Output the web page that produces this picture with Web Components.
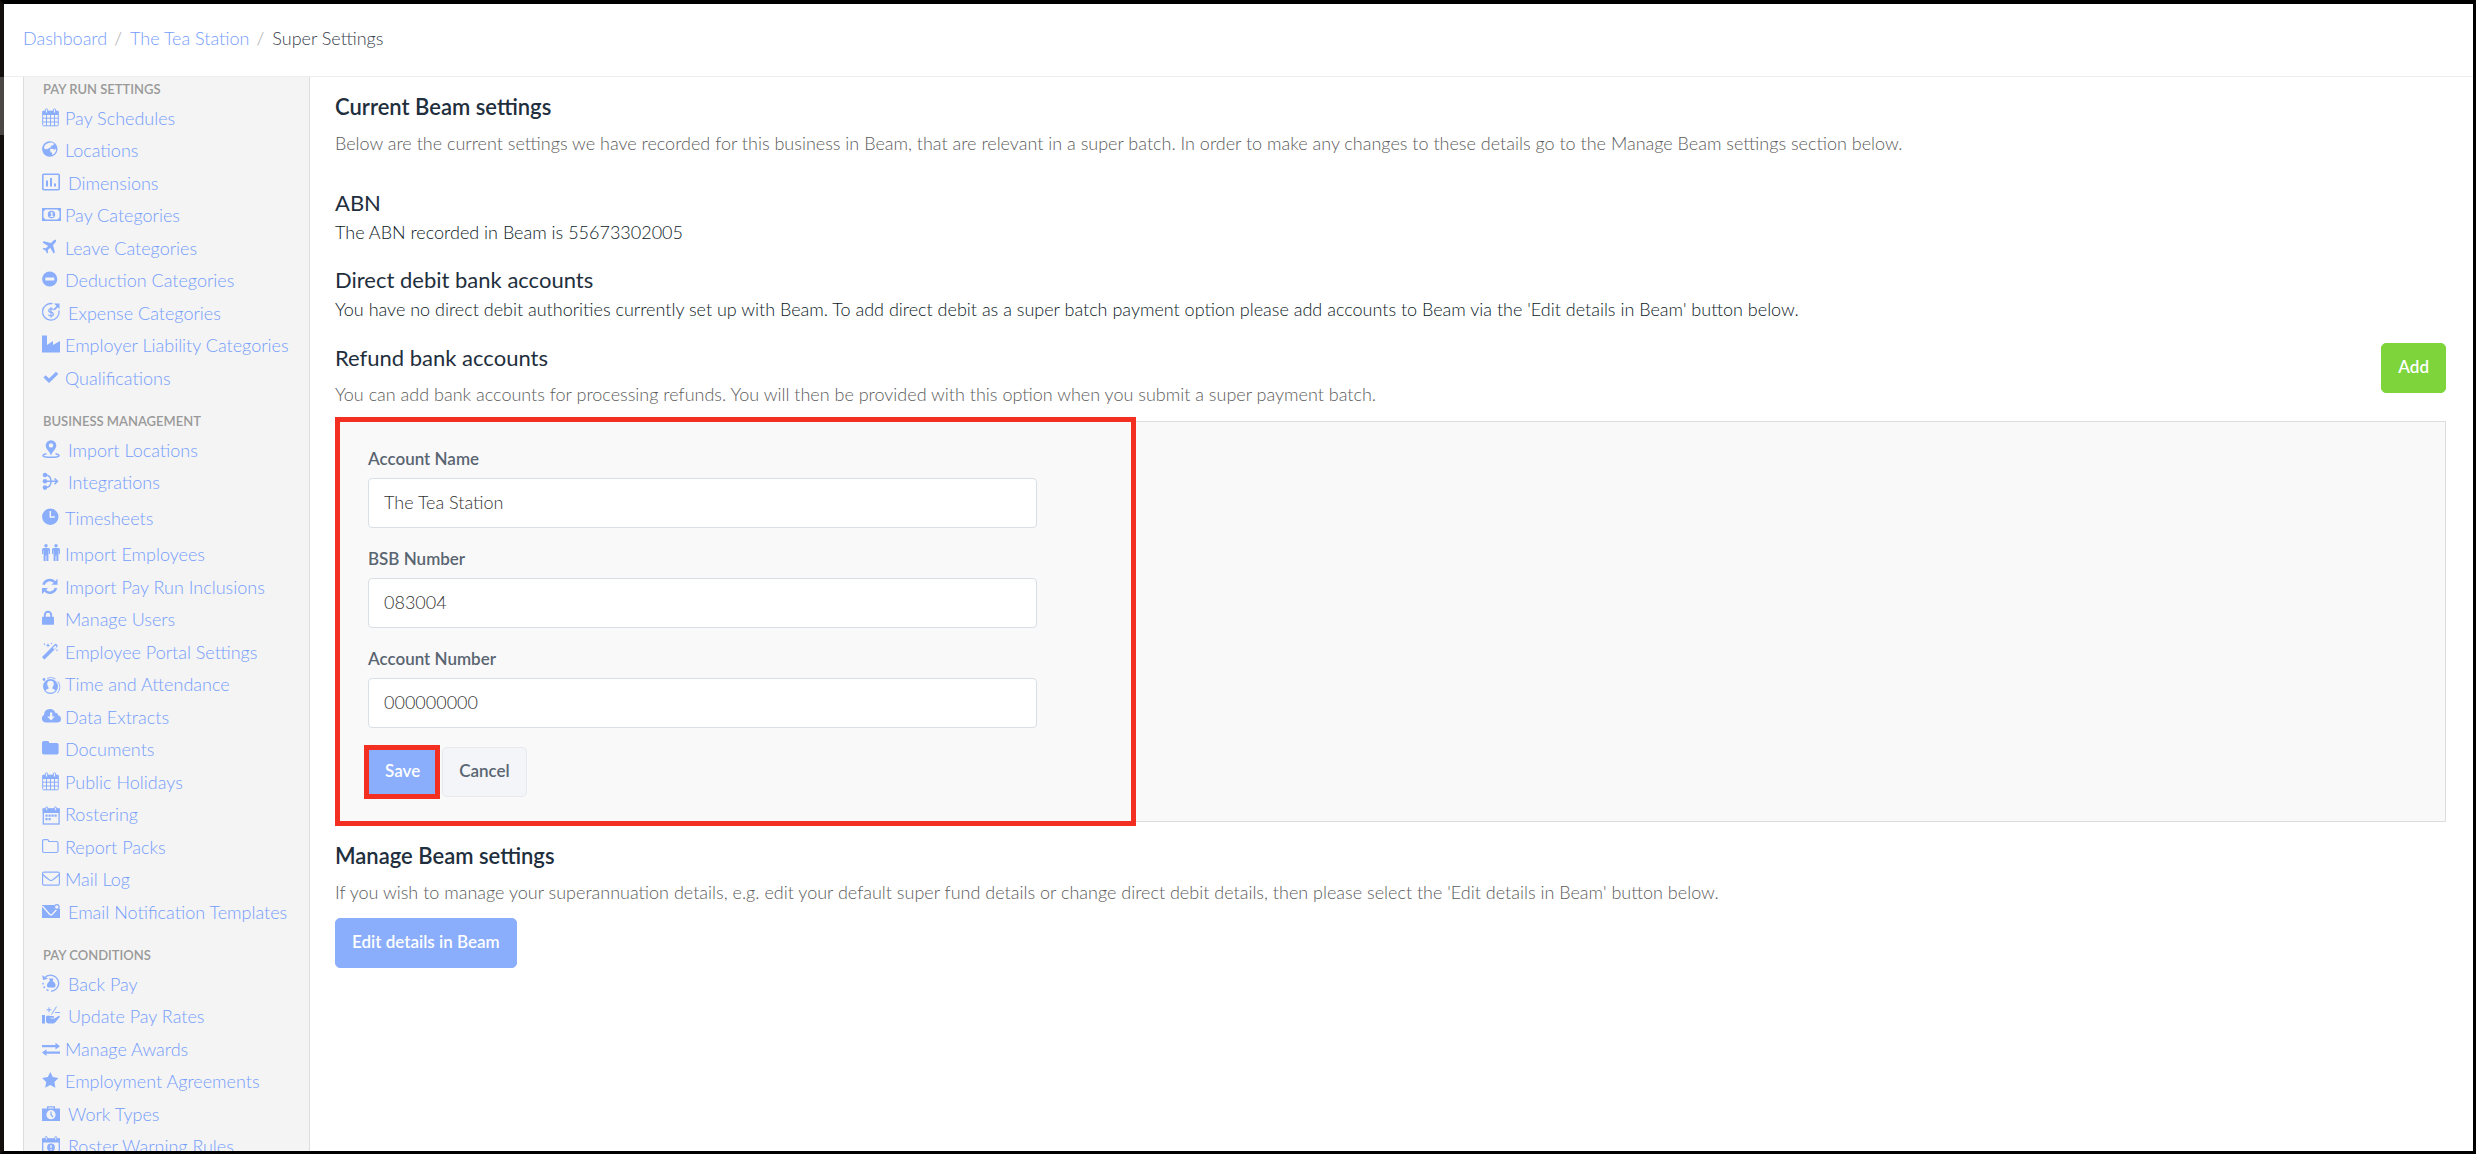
<!DOCTYPE html>
<html lang="en">
<head>
<meta charset="utf-8">
<title>Super Settings</title>
<style>
    body {
        margin: 0;
        font-family: Lato, "Open Sans", sans-serif;
        font-size: 18px;
        font-weight: 300;
        line-height: 24px;
        color: #0c1a26;
        background-color: white;
        --accent: #8aadfc;
        --link: #759dfc;
        --muted: #5c5c5c;
        --label: #5a6572;
        --mark: #f22f20;
        --side: #f4f4f4;
    }
</style>
</head>
<body>
<app-shell>
    <bread-crumbs slot="header" trail="Dashboard,The Tea Station" current="Super Settings"></bread-crumbs>

    <nav-section slot="sidebar" heading="Pay run settings">
        <nav-item icon="calendar">Pay Schedules</nav-item>
        <nav-item icon="globe">Locations</nav-item>
        <nav-item icon="chart" wide>Dimensions</nav-item>
        <nav-item icon="money">Pay Categories</nav-item>
        <nav-item icon="plane">Leave Categories</nav-item>
        <nav-item icon="minus">Deduction Categories</nav-item>
        <nav-item icon="expense" wide>Expense Categories</nav-item>
        <nav-item icon="industry">Employer Liability Categories</nav-item>
        <nav-item icon="check">Qualifications</nav-item>
    </nav-section>

    <nav-section slot="sidebar" heading="Business management">
        <nav-item icon="pin" wide>Import Locations</nav-item>
        <nav-item icon="merge" wide>Integrations</nav-item>
        <nav-item icon="clock" roomy>Timesheets</nav-item>
        <nav-item icon="people">Import Employees</nav-item>
        <nav-item icon="refresh">Import Pay Run Inclusions</nav-item>
        <nav-item icon="lock">Manage Users</nav-item>
        <nav-item icon="wand">Employee Portal Settings</nav-item>
        <nav-item icon="attendance">Time and Attendance</nav-item>
        <nav-item icon="cloud">Data Extracts</nav-item>
        <nav-item icon="folder">Documents</nav-item>
        <nav-item icon="calendar">Public Holidays</nav-item>
        <nav-item icon="roster">Rostering</nav-item>
        <nav-item icon="folderopen">Report Packs</nav-item>
        <nav-item icon="mail">Mail Log</nav-item>
        <nav-item icon="mailnotice" wide>Email Notification Templates</nav-item>
    </nav-section>

    <nav-section slot="sidebar" heading="Pay conditions">
        <nav-item icon="backpay" wide>Back Pay</nav-item>
        <nav-item icon="rates" wide>Update Pay Rates</nav-item>
        <nav-item icon="exchange">Manage Awards</nav-item>
        <nav-item icon="star">Employment Agreements</nav-item>
        <nav-item icon="worktype" wide>Work Types</nav-item>
        <nav-item icon="warning" wide>Roster Warning Rules</nav-item>
    </nav-section>

    <super-settings></super-settings>
</app-shell>

<script>
// Every drawing has its text's middle line at y = 10
const ICONS = {
    calendar: `<g fill="none" stroke="currentColor"><rect x=".7" y="3.2" width="15.6" height="14.6" rx="1"/><path d="M.7 6.5h15.6M.7 10.2h15.6M.7 14h15.6M4.5 6v12M8.5 6v12M12.5 6v12"/></g><path d="M.5 3h16v3.4H.5z"/><g fill="#f4f4f4" stroke="currentColor"><rect x="3.4" y=".8" width="2.2" height="4.2" rx="1"/><rect x="11.4" y=".8" width="2.2" height="4.2" rx="1"/></g>`,
    globe: `<circle cx="7.8" cy="9" r="7.7"/><path fill="#f4f4f4" d="M8.500 2.500l2.500.2 1 1.300-1.200 1.500-1.800.3-.3 1.700-2 .4-.7 1.600-1.200-.8L3 9.500 2 7.500l.8-2.300L5 3.500zM8 9l2.500-.2L13 10l.8-2 .4 2.500-1.700 3-2.500 1.700.3-2.200L8.500 12z"/>`,
    chart: `<rect x=".8" y="1.3" width="16.4" height="15.4" rx="1" fill="none" stroke="currentColor" stroke-width="1.6"/><path d="M4 7.5h2v6H4zM8 5h2v8.5H8zM12 10.5h2v3h-2z"/>`,
    money: `<path fill-rule="evenodd" d="M0 3h19v13H0zM3.5 4.5L1.5 6.5v6l2 2h12l2-2v-6l-2-2z"/><circle cx="9.5" cy="9.5" r="3.7"/><path fill="#f4f4f4" d="M8.3 8l1.4-1h.9v4h.8v.9H8.200V11h1V8.300l-.6.4z"/>`,
    plane: `<path d="M14 1.800q.7 1.500-1 3.200L11 7l1.900 7.300-1.300 1.200-3.400-5.700-2.500 2.400.4 2.200-1 1L3.500 12.500.5 11l1-1 2.300.3 2.400-2.400L.5 4.500l1.300-1.200L9 5l2-2q1.800-1.700 3-1.200z"/>`,
    minus: `<circle cx="7.700" cy="9" r="7.600"/><rect x="3.300" y="7.500" width="9" height="3" rx=".6" fill="#f4f4f4"/>`,
    expense: `<path d="M10.500.7A8.300 8.300 0 1 0 17 7.500" fill="none" stroke="currentColor" stroke-width="1.300"/><path d="M12 .5h5.500V6l-1.700-1.700-3 3-1.200-1.200 3-3z"/><path d="M11.500 7Q11 5.700 9 5.700T6.700 7.400Q6.700 9 9 9.200t2.400 2Q11.400 13 9 13t-2.600-1.500M9 4.300v10.400" fill="none" stroke="currentColor" stroke-width="1.200"/>`,
    industry: `<path d="M0 .5h5V10l6-4v4l7-4v11.500H0z"/>`,
    check: `<path d="M1.500 9.500l2.200-2.200 3.300 3.200L14 3.800 16.300 6 7 15z"/>`,
    pin: `<path fill-rule="evenodd" d="M9 .2a5.300 5.300 0 0 1 5.300 5.300C14.300 9 10.500 11 9 15.500 7.500 11 3.700 9 3.700 5.500A5.300 5.300 0 0 1 9 .2zm0 3a2.200 2.200 0 1 0 0 4.400 2.200 2.200 0 0 0 0-4.400z"/><path d="M4.500 13.800Q1 14.500 1 15.800q0 1.500 8 1.500t8-1.500q0-1.300-3.500-2" fill="none" stroke="currentColor" stroke-width="1.600"/>`,
    merge: `<circle cx="3" cy="3" r="2.300"/><circle cx="3" cy="9.300" r="2.300"/><circle cx="3" cy="15.600" r="2.300"/><path d="M3 3c5 0 6 3 6 6.300S8 15.600 3 15.600M3 9.300h12M12.500 6.500l3 2.800-3 2.800" fill="none" stroke="currentColor" stroke-width="1.500"/>`,
    clock: `<circle cx="8.300" cy="8.700" r="8.200"/><path d="M8.300 3v6h4.500" fill="none" stroke="#f4f4f4" stroke-width="1.500"/>`,
    people: `<g id="man"><circle cx="4" cy="1.700" r="1.700"/><path d="M1.500 4h5Q8 4 8 5.500V10H6.800V6.500h-.4V17H4.400v-5.500h-.8V17H1.600V6.500h-.4V10H0V5.500Q0 4 1.500 4z"/></g><use href="#man" x="10"/>`,
    refresh: `<path d="M1.500 7.800A6.500 6.500 0 0 1 12.500 5M14 11a6.500 6.500 0 0 1-11 2.700" fill="none" stroke="currentColor" stroke-width="2.500"/><path d="M15.500 1.700v6h-6zM0 17v-6h6z"/>`,
    lock: `<path d="M2.800 9V6a3.200 3.200 0 0 1 6.400 0v3" fill="none" stroke="currentColor" stroke-width="1.900"/><rect y="7.800" width="12" height="8" rx=".8"/>`,
    wand: `<path fill-rule="evenodd" d="M.5 14.500L13 2q.6-.5 1.200 0l1.300 1.200q.5.600 0 1.200L3 17q-.6.500-1.200 0L.5 15.700q-.5-.6 0-1.200zM10.800 6l1.300 1.300 2.500-2.500-1.300-1.300z"/><path d="M6 1l.6 1.700L8.300 3.400l-1.700.6L6 5.700l-.6-1.700-1.700-.6 1.700-.7zM2.500 1l.4.800.8.400-.8.400-.4.800-.4-.8-.8-.4.800-.4zM9.500.3l.3.700.7.300-.7.400-.3.700-.3-.7-.7-.4.700-.3zM15 7l.4.800.8.400-.8.400-.4.800-.4-.8-.8-.4.800-.4z"/>`,
    attendance: `<circle cx="8.500" cy="12.500" r="7.500"/><path fill="#f4f4f4" d="M8.500 6.800q3.300 0 3.300 3.300 0 2-1.300 3.200v1.500q2.300.5 3 2-2 2-5 2t-5-2q.7-1.500 3-2v-1.500q-1.300-1.200-1.300-3.200 0-3.300 3.300-3.300z"/><path d="M16 7.500A9 9 0 0 1 15.500 19M5 4.300A9 9 0 0 1 13.500 4.800" fill="none" stroke="currentColor" stroke-width=".9"/><circle cx="2" cy="5.500" r="1.400"/>`,
    cloud: `<path fill-rule="evenodd" d="M4 15.500A4 4 0 0 1 2 8q.3-6 6-6 4 0 5.200 3.700Q16 5.500 16 8.300q3 .8 3 3.700 0 3.500-4 3.500zM8 5.500V9.500H5.300L9 13.500l3.700-4H10.300v-4z"/>`,
    folder: `<path d="M1.800 2h3.800q1.700 0 1.700 2h7.500Q16.600 4 16.600 5.700v8Q16.600 15.500 14.800 15.500H1.800Q0 15.500 0 13.700v-10Q0 2 1.800 2z"/>`,
    roster: `<rect x="1.300" y="5" width="15.800" height="15" fill="none" stroke="currentColor" stroke-width="1.300"/><path d="M.7 4.500h17V9H.7z"/><g fill="#f4f4f4" stroke="currentColor"><rect x="3.700" y="2.900" width="2" height="3.600" rx="1"/><rect x="12.400" y="2.900" width="2" height="3.600" rx="1"/></g><path d="M6.500 10.500h2.200v2.200H6.500zM9.500 10.500h2.200v2.200H9.500zM12.500 10.500h2.200v2.200h-2.200zM3.400 10.500h2.200v2.200H3.400zM3.400 14h2.200v2.200H3.400zM6.500 14h2.200v2.200H6.500z"/>`,
    folderopen: `<path fill="none" stroke="currentColor" stroke-width="1.200" d="M2 2.600h3.300q1.500 0 1.500 1.900h7.700Q16 4.500 16 6v8Q16 15.500 14.500 15.500H2Q.6 15.500 .6 14V4Q.6 2.600 2 2.600z"/>`,
    mail: `<g fill="none" stroke="currentColor" stroke-width="1.200"><rect x=".6" y="3.200" width="16.800" height="13" rx="1.400"/><path d="M.8 5.500Q3 7.800 7.500 11q1.500 1 3 0 4.500-3.200 6.700-5.500"/></g>`,
    mailnotice: `<path d="M0 3h12v4h6v9H0z"/><path d="M.3 4l7.300 8.200q1.400 1.300 2.800 0L15 7" fill="none" stroke="#f4f4f4" stroke-width="1.300"/><circle cx="14.800" cy="5" r="2.300" fill="#f4f4f4" stroke="currentColor" stroke-width="1.200"/>`,
    backpay: `<path d="M2.500 4A8 8 0 1 1 9 17.200" fill="none" stroke="currentColor" stroke-width="1.300"/><path d="M0 1.200L1.200 6 6 4.800z"/><path d="M7 4.500h4.500L10.700 7q3.300 2.300 2.800 5-.3 1.500-1.500 1.500H6.500Q5 13.500 5 12q-.5-2.700 2.800-5z"/><path d="M6.500 16.700L4.500 15.700M2.700 14l-1-1.500M1 10.500V8.800" fill="none" stroke="currentColor" stroke-width="1.500"/>`,
    rates: `<path d="M0 9h3v8.500H0zM4 10.500Q6 9 8 10h3q1.700.3.800 1.800H8.500v.7h4l4-2.600q1.700-.4 1.200 1L13 16.800q-1 .7-2 .7H6L4 16z"/><path d="M4.500 3.800h5M7 1.300v5M14.500.5L9.500 8.500M13 6.500h5" fill="none" stroke="currentColor" stroke-width="1"/>`,
    exchange: `<path d="M0 6h13.500V3.700L18 7.200l-4.500 3.300V8.300H0zM18 14.700H4.500V17L0 13.500l4.500-3.300v2.200H18z"/>`,
    star: `<path d="M8.300 1l2.500 5.100 5.700.9-4.100 4 1 5.700-5.100-2.700-5.100 2.700 1-5.700L.1 7l5.700-.9z"/>`,
    worktype: `<path fill-rule="evenodd" d="M0 4.500h5V2.300h8v2.200h5V17H0zM6.300 3.500v1h5.400v-1z"/><circle cx="9" cy="10.700" r="4.600" fill="#f4f4f4"/><path d="M9 7.500v3.200l2 2.300" fill="none" stroke="currentColor" stroke-width="1.200"/>`,
    warning: `<rect x=".7" y="3" width="16.600" height="16" fill="none" stroke="currentColor" stroke-width="1.300"/><path d="M0 2.500h18v4H0z"/><g fill="#f4f4f4" stroke="currentColor"><rect x="3.200" y=".6" width="2" height="3.600" rx="1"/><rect x="12.800" y=".6" width="2" height="3.600" rx="1"/></g><circle cx="9" cy="11.500" r="3.900"/><path d="M9 9v3M9 13v1.200" stroke="#f4f4f4" stroke-width="1.300"/>`
}

class AppShell extends HTMLElement {
    constructor() {
        super();
        this.attachShadow({ mode: "open" }).innerHTML = /*html*/`
<style>
    :host {
        display: grid;
        grid-template-rows: auto 1fr;
        box-sizing: border-box;
        position: relative;
        height: calc(100vh - 1px);
        margin-right: 1px;
        border: solid black;
        border-width: 4px 3px 3px 4px;
        border-left-color: #14100e;
    }

    header {
        padding: 22px 19px 26px;
        border-bottom: 1px solid #eee;
    }

    #columns {
        display: flex;
        min-height: 0;
        overflow: hidden;
    }

    nav {
        flex: none;
        box-sizing: border-box;
        width: 287px;
        margin-left: 19px;
        padding: 0 18px;
        border: solid #ddd;
        border-width: 0 1px;
        background-color: var(--side);
    }

    main {
        flex: 1;
        min-width: 0;
        padding: 17px 27px 0 25px;
    }

    /* lighter piece of the left edge, beside the top of the columns */
    #handle {
        position: absolute;
        left: -4px;
        top: 73px;
        width: 4px;
        height: 58px;
        background-color: #4a4745;
    }
</style>
<header><slot name="header"></slot></header>
<div id="columns">
    <nav aria-label="Settings"><slot name="sidebar"></slot></nav>
    <main><slot></slot></main>
</div>
<div id="handle"></div>
`;
    }
}

class BreadCrumbs extends HTMLElement {
    connectedCallback() {
        const links = this.getAttribute("trail").split(",").map((name) => {
            return `<li><a href="#">${name}</a></li>`
        })
        this.attachShadow({ mode: "open" }).innerHTML = /*html*/`
<style>
    :host { display: block; }
    ol {
        display: flex;
        margin: 0;
        padding: 0;
        list-style: none;
        color: #38424e;
    }
    a { color: var(--link); text-decoration: none; }
    li:not(:last-child)::after {
        content: "/";
        padding: 0 8px 0 7px;
        color: #aaa;
    }
</style>
<ol>${links.join("")}<li aria-current="page">${this.getAttribute("current")}</li></ol>
`;
    }
}

class NavSection extends HTMLElement {
    connectedCallback() {
        this.attachShadow({ mode: "open" }).innerHTML = /*html*/`
<style>
    :host { display: block; padding-bottom: 15px; }
    h2 {
        margin: 0;
        padding: 1px 1px 2px;
        font-size: 13px;
        line-height: 22px;
        font-weight: 600;
        text-transform: uppercase;
        color: #999;
    }
    ::slotted(nav-item:nth-child(even)) { padding-bottom: 1px; }
    ::slotted(nav-item[roomy]) { margin: 3px 0 4px; }
</style>
<h2>${this.getAttribute("heading")}</h2>
<div role="list"><slot></slot></div>
`;
    }
}

class NavItem extends HTMLElement {
    connectedCallback() {
        this.setAttribute("role", "listitem")
        this.attachShadow({ mode: "open" }).innerHTML = /*html*/`
<style>
    :host { display: block; }
    a {
        display: flex;
        align-items: center;
        gap: 3px;
        height: 32px;
        line-height: 32px;
        white-space: nowrap;
        color: var(--link);
        text-decoration: none;
    }
    :host([wide]) a { gap: 6px; }
    svg { flex: none; overflow: visible; color: var(--accent); fill: currentColor; }
</style>
<a href="#"><svg width="20" height="20" viewBox="0 0 20 20" aria-hidden="true">${ICONS[this.getAttribute("icon")]}</svg><slot></slot></a>
`;
    }
}

class TextField extends HTMLElement {
    connectedCallback() {
        this.attachShadow({ mode: "open" }).innerHTML = /*html*/`
<style>
    :host { display: block; }
    label {
        display: block;
        margin-bottom: 7px;
        font-weight: 600;
        font-size: 17px;
        color: var(--label);
    }
    input {
        display: block;
        box-sizing: border-box;
        width: 100%;
        height: 50px;
        padding: 0 15px 3px;
        border: 1px solid #d9dfe4;
        border-radius: 4px;
        background-color: white;
        font: inherit;
        color: #333;
    }
</style>
<label for="field">${this.getAttribute("label")}</label>
<input id="field" type="text" value="${this.getAttribute("value")}">
`;
    }
}

class UiButton extends HTMLElement {
    constructor() {
        super();
        this.attachShadow({ mode: "open" }).innerHTML = /*html*/`
<style>
    :host { display: inline-block; position: relative; }
    button {
        display: block;
        height: 50px;
        padding: 0 16px 2px;
        border: 1px solid var(--accent);
        border-radius: 5px;
        background-color: var(--accent);
        font: inherit;
        font-size: 17px;
        font-weight: 600;
        color: white;
    }
    :host([kind="add"]) button { background-color: #7dd53b; border-color: #7dd53b; }
    :host([kind="plain"]) button { background-color: #f3f5f8; border-color: #e6e9ed; color: var(--label); }
    :host([marked])::after {
        content: "";
        position: absolute;
        inset: -2px -3px -2px -4px;
        border: 5px solid var(--mark);
    }
</style>
<button type="button"><slot></slot></button>
`;
    }
}

class AccountForm extends HTMLElement {
    constructor() {
        super();
        this.attachShadow({ mode: "open" }).innerHTML = /*html*/`
<style>
    :host {
        display: block;
        position: relative;
        padding: 25px 32px 24px;
        border: 1px solid #ddd;
        background-color: #f9f9f9;
    }
    form { display: grid; gap: 19px; max-width: 669px; }
    #actions { display: flex; gap: 5px; }
    #mark {
        position: absolute;
        inset: -5px 0 -5px -1px;
        box-sizing: border-box;
        max-width: 801px;
        border: 5px solid var(--mark);
        pointer-events: none;
    }
</style>
<form>
    <text-field label="Account Name" value="The Tea Station"></text-field>
    <text-field label="BSB Number" value="083004"></text-field>
    <text-field label="Account Number" value="000000000"></text-field>
    <div id="actions">
        <ui-button marked>Save</ui-button>
        <ui-button kind="plain">Cancel</ui-button>
    </div>
</form>
<div id="mark"></div>
`;
    }
}

class SuperSettings extends HTMLElement {
    constructor() {
        super();
        this.attachShadow({ mode: "open" }).innerHTML = /*html*/`
<style>
    :host { display: block; }
    h1, h2, h3, p { margin: 0; }
    h1, h2, h3 { font-size: 22px; line-height: 26px; color: #1f2f3d; }
    h1, h2 { font-weight: 600; }
    h3 { font-weight: 400; }
    .help { margin-top: 11px; color: var(--muted); }
    .block { margin-top: 23px; }
    .block.first { margin-top: 35px; }
    .block p:not(.help) { margin-top: 4px; }
    .refund {
        display: flex;
        justify-content: space-between;
        align-items: flex-start;
        margin: 22px 0 15px;
    }
    .refund h3 { padding-top: 2px; }
    .manage { margin-top: 21px; }
    .manage ui-button { margin-top: 14px; }
</style>
<h1>Current Beam settings</h1>
<p class="help">Below are the current settings we have recorded for this business in Beam, that are relevant in a super batch. In order to make any changes to these details go to the Manage Beam settings section below.</p>
<section class="block first">
    <h3>ABN</h3>
    <p>The ABN recorded in Beam is 55673302005</p>
</section>
<section class="block">
    <h3>Direct debit bank accounts</h3>
    <p>You have no direct debit authorities currently set up with Beam. To add direct debit as a super batch payment option please add accounts to Beam via the 'Edit details in Beam' button below.</p>
</section>
<section class="refund">
    <div>
        <h3>Refund bank accounts</h3>
        <p class="help">You can add bank accounts for processing refunds. You will then be provided with this option when you submit a super payment batch.</p>
    </div>
    <ui-button kind="add">Add</ui-button>
</section>
<account-form></account-form>
<section class="manage">
    <h2>Manage Beam settings</h2>
    <p class="help">If you wish to manage your superannuation details, e.g. edit your default super fund details or change direct debit details, then please select the 'Edit details in Beam' button below.</p>
    <ui-button>Edit details in Beam</ui-button>
</section>
`;
    }
}

customElements.define("app-shell", AppShell);
customElements.define("bread-crumbs", BreadCrumbs);
customElements.define("nav-section", NavSection);
customElements.define("nav-item", NavItem);
customElements.define("text-field", TextField);
customElements.define("ui-button", UiButton);
customElements.define("account-form", AccountForm);
customElements.define("super-settings", SuperSettings);
</script>
</body>
</html>
